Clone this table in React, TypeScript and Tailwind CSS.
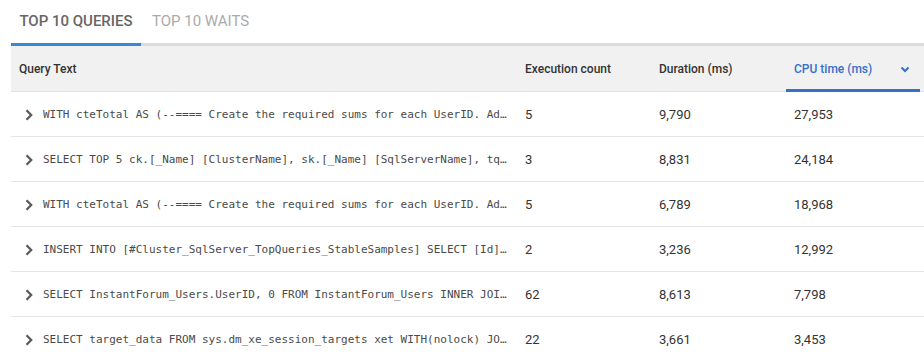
import React from "react";

const rows = [
  { q: "WITH cteTotal AS (--==== Create the required sums for each UserID. Ad…", e: "5", d: "9,790", c: "27,953" },
  { q: "SELECT TOP 5 ck.[_Name] [ClusterName], sk.[_Name] [SqlServerName], tq…", e: "3", d: "8,831", c: "24,184" },
  { q: "WITH cteTotal AS (--==== Create the required sums for each UserID. Ad…", e: "5", d: "6,789", c: "18,968" },
  { q: "INSERT INTO [#Cluster_SqlServer_TopQueries_StableSamples] SELECT [Id]…", e: "2", d: "3,236", c: "12,992" },
  { q: "SELECT InstantForum_Users.UserID, 0 FROM InstantForum_Users INNER JOI…", e: "62", d: "8,613", c: "7,798" },
  { q: "SELECT target_data FROM sys.dm_xe_session_targets xet WITH(nolock) JO…", e: "22", d: "3,661", c: "3,453" },
];

const Chevron = () => (
  <svg width="10" height="12" viewBox="0 0 10 12" className="shrink-0">
    <path d="M2.5 1.3 L7.2 6 L2.5 10.7" fill="none" stroke="#5a5a5a" strokeWidth="2.3" />
  </svg>
);

export default function App() {
  return (
    <div className="w-[924px] h-[361px] bg-white overflow-hidden" style={{ fontFamily: "Roboto, 'Liberation Sans', sans-serif" }}>
      <div className="pl-[11px]">
        <div className="flex h-[43px] items-center">
          <div className="w-[130px] text-center text-[15px] font-medium text-[#666] pt-[0px]">TOP 10 QUERIES</div>
          <div className="pl-[11px] text-[15px] text-[#aaa] pt-[0px]">TOP 10 WAITS</div>
        </div>
        <div className="flex h-[3px] bg-[#dcdcdc]">
          <div className="w-[130px] bg-[#3a86d9]" />
        </div>
        <div className="flex h-[46px] bg-[#f1f1f1] border-b border-[#e2e2e2] text-[12px] font-medium text-[#333]">
          <div className="w-[506px] pl-2 flex items-center">Query Text</div>
          <div className="w-[134px] pl-2 flex items-center">Execution count</div>
          <div className="w-[135px] pl-2 flex items-center">Duration (ms)</div>
          <div className="w-[134px] pl-2 pr-[10px] flex items-center justify-between text-[#3570c8] border-b-[3px] border-[#3570c8] mb-[-1px] pt-[3px]">
            <span>CPU time (ms)</span>
            <svg width="10" height="7" viewBox="0 0 10 7">
              <path d="M1.5 1.5 L5 5 L8.5 1.5" fill="none" stroke="#3570c8" strokeWidth="2" />
            </svg>
          </div>
        </div>
        {rows.map((r, i) => (
          <div key={i} className="flex h-[45px] pt-[2px] border-b border-[#e4e4e4] text-[13px] text-[#333] items-center">
            <div className="w-[506px] pl-[13px] flex items-center gap-[9px]">
              <Chevron />
              <span className="whitespace-nowrap text-[11px] text-[#4a4a4a]" style={{ fontFamily: "'DejaVu Sans Mono', monospace" }}>{r.q}</span>
            </div>
            <div className="w-[134px] pl-2">{r.e}</div>
            <div className="w-[135px] pl-2">{r.d}</div>
            <div className="w-[134px] pl-2">{r.c}</div>
          </div>
        ))}
      </div>
    </div>
  );
}
